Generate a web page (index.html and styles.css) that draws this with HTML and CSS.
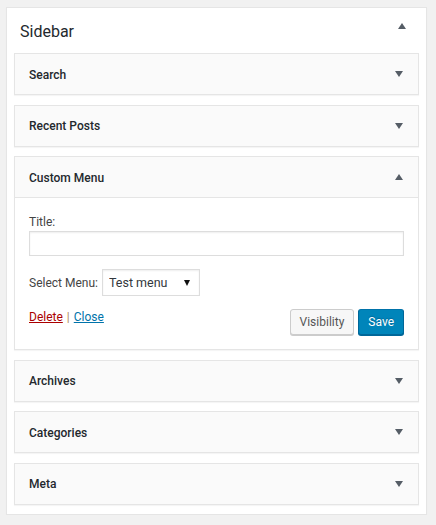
FILE: index.html
```html
<!DOCTYPE html>
<html lang="en">
<head>
<meta charset="utf-8">
<title>Sidebar widgets</title>
<link rel="stylesheet" href="styles.css">
</head>
<body>
<div class="sidebar">
  <div class="sidebar-name">
    <h2>Sidebar</h2>
    <span class="arrow arrow-up"></span>
  </div>

  <div class="widget">
    <div class="widget-top"><h3>Search</h3><span class="arrow arrow-down"></span></div>
  </div>

  <div class="widget">
    <div class="widget-top"><h3>Recent Posts</h3><span class="arrow arrow-down"></span></div>
  </div>

  <div class="widget open">
    <div class="widget-top"><h3>Custom Menu</h3><span class="arrow arrow-up"></span></div>
    <div class="widget-inside">
      <label class="field-label" for="title">Title:</label>
      <input class="text-input" id="title" type="text">
      <div class="select-row">
        <label class="select-label" for="menu">Select Menu:</label>
        <span class="select-wrap">
          <select class="select" id="menu"><option>Test menu</option></select>
        </span>
      </div>
      <div class="actions">
        <div class="links">
          <a class="link-delete" href="#">Delete</a><span class="sep">|</span><a class="link-close" href="#">Close</a>
        </div>
        <div class="buttons">
          <button class="button">Visibility</button>
          <button class="button button-primary">Save</button>
        </div>
      </div>
    </div>
  </div>

  <div class="widget">
    <div class="widget-top"><h3>Archives</h3><span class="arrow arrow-down"></span></div>
  </div>

  <div class="widget">
    <div class="widget-top"><h3>Categories</h3><span class="arrow arrow-down"></span></div>
  </div>

  <div class="widget">
    <div class="widget-top"><h3>Meta</h3><span class="arrow arrow-down"></span></div>
  </div>
</div>
</body>
</html>
```

FILE: styles.css
```css
* { box-sizing: border-box; }

html, body {
  margin: 0;
  padding: 0;
  background: #f1f1f1;
}

body {
  font-family: Roboto, "Liberation Sans", sans-serif;
  font-size: 12px;
  line-height: 16px;
  color: #444;
}

.sidebar {
  margin: 7px 9px 0 6px;
  padding: 0 7px;
  background: #fff;
  border: 1px solid #e5e5e5;
  box-shadow: 0 1px 1px rgba(0, 0, 0, 0.04);
}

.sidebar-name {
  height: 45px;
  display: flex;
  align-items: center;
  justify-content: space-between;
  padding: 0 13px 0 6px;
}

.sidebar-name h2 {
  margin: 0;
  font-size: 16px;
  font-weight: 400;
  line-height: 20px;
  color: #23282d;
  padding-top: 2px;
}

.sidebar-name .arrow {
  margin-bottom: 10px;
}

.arrow {
  display: block;
  width: 0;
  height: 0;
  border-left: 4px solid transparent;
  border-right: 4px solid transparent;
}

.arrow-down {
  border-top: 6px solid #555d66;
}

.arrow-up {
  border-bottom: 6px solid #555d66;
}

.widget {
  margin-bottom: 9.5px;
  border: 1px solid #e5e5e5;
  background: #fff;
  box-shadow: 0 1px 1px rgba(0, 0, 0, 0.04);
}

.widget-top {
  height: 40px;
  display: flex;
  align-items: center;
  justify-content: space-between;
  padding: 0 15px 0 14px;
  background: #fafafa;
}

.widget-top h3 {
  margin: 0;
  padding-top: 1px;
  font-size: 12px;
  font-weight: 500;
  line-height: 16px;
  color: #23282d;
}

.widget.open .widget-top {
  border-bottom: 1px solid #e5e5e5;
  height: 41px;
}

.widget-inside {
  padding: 16px 14px 14px;
  display: flex;
  flex-direction: column;
}

.field-label {
  display: block;
  height: 16px;
}

.text-input {
  display: block;
  width: 100%;
  height: 25px;
  margin: 1px 0 0;
  border: 1px solid #ddd;
  background: #fff;
  box-shadow: inset 0 1px 2px rgba(0, 0, 0, 0.07);
  font: inherit;
  padding: 0 6px;
  outline: none;
}

.select-row {
  display: flex;
  align-items: center;
  margin-top: 13px;
  height: 27px;
}

.select-label {
  margin-right: 4px;
  padding-top: 1px;
}

.select-wrap {
  position: relative;
  display: block;
  width: 98px;
  height: 27px;
}

.select-wrap::after {
  content: "";
  position: absolute;
  right: 10px;
  top: 11px;
  width: 0;
  height: 0;
  border-left: 3px solid transparent;
  border-right: 3px solid transparent;
  border-top: 6px solid #111;
  pointer-events: none;
}

.select {
  -webkit-appearance: none;
  appearance: none;
  display: block;
  width: 100%;
  height: 27px;
  margin: 0;
  padding: 0 20px 0 6px;
  border: 1px solid #ddd;
  border-radius: 0;
  background: #fff;
  box-shadow: inset 0 1px 2px rgba(0, 0, 0, 0.07);
  font-family: inherit;
  font-size: 12.5px;
  color: #32373c;
  outline: none;
}

.actions {
  display: flex;
  justify-content: space-between;
  align-items: flex-start;
  margin-top: 13px;
  height: 26px;
}

.links {
  line-height: 16px;
}

.link-delete {
  color: #a00;
  text-decoration: underline;
}

.link-close {
  color: #0073aa;
  text-decoration: underline;
}

.sep {
  color: #b08a5a;
  margin: 0 4px;
}

.buttons {
  display: flex;
  gap: 4px;
}

.button {
  height: 26px;
  margin: 0;
  padding: 0 9px;
  border: 1px solid #ccc;
  border-radius: 3px;
  background: #f7f7f7;
  box-shadow: 0 1px 0 #ccc;
  color: #555;
  font-family: inherit;
  font-size: 12px;
  line-height: 24px;
  cursor: pointer;
}

.button-primary {
  background: #0085ba;
  border-color: #0073aa #006799 #006799;
  box-shadow: 0 1px 0 #006799;
  color: #fff;
  text-shadow: 0 -1px 1px #006799;
}
```
